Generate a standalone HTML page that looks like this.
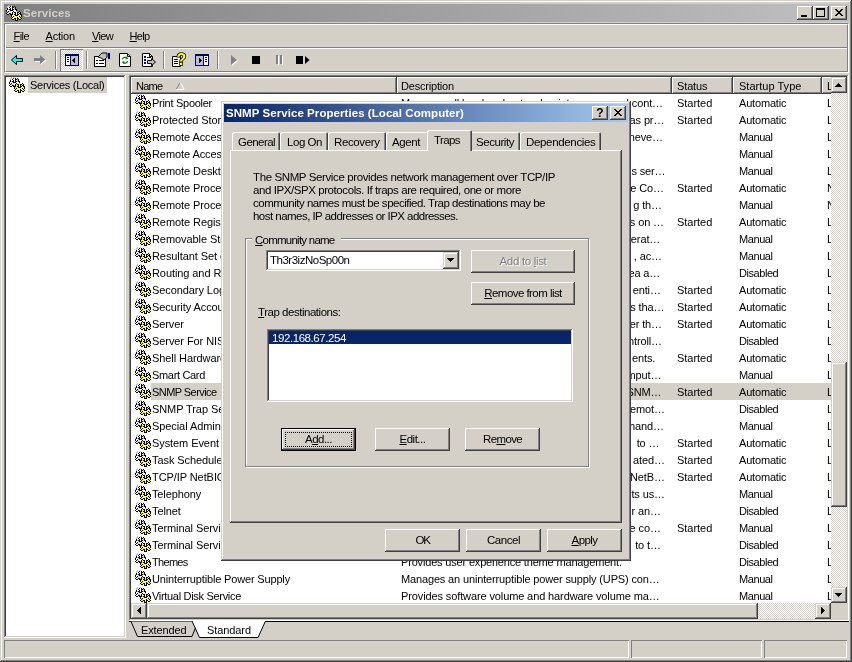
<!DOCTYPE html><html><head><meta charset="utf-8"><title>Services</title><style>
*{box-sizing:border-box}
html,body{margin:0;padding:0}
body{will-change:transform;width:852px;height:662px;position:relative;overflow:hidden;background:#d4d0c8;font-family:"Liberation Sans",sans-serif;font-size:11px;color:#000;line-height:13px}
.a{position:absolute}
.ic{position:absolute;display:block}
.t{position:absolute;white-space:nowrap;font-size:11px;letter-spacing:-0.12px;line-height:13px}
.d{position:absolute;white-space:nowrap;font-size:11.5px;letter-spacing:-0.3px;line-height:13px}
.b{font-weight:bold;font-size:11.5px;letter-spacing:0.06px}
u{text-decoration:underline;text-underline-offset:1px;text-decoration-thickness:1px}
.raised{box-shadow:inset -1px -1px #404040,inset 1px 1px #fff,inset -2px -2px #808080,inset 2px 2px #d4d0c8;background:#d4d0c8}
.raised2{box-shadow:inset -1px -1px #404040,inset 1px 1px #d4d0c8,inset -2px -2px #808080,inset 2px 2px #fff;background:#d4d0c8}
.sunken{box-shadow:inset -1px -1px #fff,inset 1px 1px #808080,inset -2px -2px #d4d0c8,inset 2px 2px #404040;background:#fff}
.dither{background:conic-gradient(#fff 25%,#d4d0c8 0 50%,#fff 0 75%,#d4d0c8 0) 0 0/2px 2px}
.hdr{position:absolute;top:77px;height:17px;background:#d4d0c8;box-shadow:inset -1px -1px #404040,inset 1px 1px #fff,inset -2px -2px #808080}
.row{position:absolute;left:132px;width:699px;height:17px}
.btn{position:absolute;text-align:center}
.vline{position:absolute;width:1px}
.hline{position:absolute;height:1px}
.gear{position:absolute;width:16px;height:16px}.gear::before{content:"";position:absolute;left:-1px;top:-1px;width:1px;height:1px;box-shadow:3px 1px #c0c0c0,6px 1px #c0c0c0,2px 2px #c0c0c0,3px 2px #c0c0c0,4px 2px #fff,5px 2px #000,6px 2px #fff,7px 2px #000,9px 2px #000,2px 3px #c0c0c0,3px 3px #fff,4px 3px #000,5px 3px #fff,6px 3px #fff,7px 3px #000,8px 3px #000,9px 3px #c0c0c0,10px 3px #000,2px 4px #000,3px 4px #fff,4px 4px #fff,5px 4px #000,6px 4px #fff,7px 4px #000,8px 4px #fff,9px 4px #c0c0c0,10px 4px #000,1px 5px #c0c0c0,2px 5px #000,3px 5px #c0c0c0,4px 5px #000,5px 5px #000,6px 5px #fff,7px 5px #000,8px 5px #000,9px 5px #c0c0c0,10px 5px #000,11px 5px #000,1px 6px #000,2px 6px #fff,3px 6px #fff,4px 6px #c0c0c0,5px 6px #000,6px 6px #000,7px 6px #000,8px 6px #fff,9px 6px #fff,10px 6px #fff,11px 6px #000,1px 7px #000,2px 7px #fff,3px 7px #000,4px 7px #fff,5px 7px #c0c0c0,6px 7px #fff,7px 7px #fff,8px 7px #000,9px 7px #fff,10px 7px #fff,11px 7px #c0c0c0,14px 7px #000,2px 8px #000,3px 8px #c0c0c0,4px 8px #c0c0c0,5px 8px #fff,6px 8px #fff,7px 8px #000,8px 8px #ff0,9px 8px #000,10px 8px #000,11px 8px #fff,12px 8px #000,13px 8px #000,14px 8px #ff0,15px 8px #000,1px 9px #000,2px 9px #fff,3px 9px #fff,4px 9px #000,5px 9px #000,6px 9px #c0c0c0,7px 9px #000,8px 9px #ff0,9px 9px #ff0,10px 9px #000,11px 9px #fff,12px 9px #000,13px 9px #ff0,14px 9px #000,15px 9px #000,2px 10px #000,3px 10px #000,5px 10px #000,6px 10px #000,7px 10px #000,8px 10px #ff0,9px 10px #000,10px 10px #000,11px 10px #fff,12px 10px #000,13px 10px #000,14px 10px #fff,15px 10px #000,16px 10px #000,6px 11px #000,7px 11px #ff0,8px 11px #ff0,9px 11px #fff,10px 11px #000,11px 11px #000,12px 11px #000,13px 11px #fff,14px 11px #ff0,15px 11px #ff0,16px 11px #000,6px 12px #000,7px 12px #ff0,8px 12px #000,9px 12px #ff0,10px 12px #fff,11px 12px #ff0,12px 12px #fff,13px 12px #ff0,14px 12px #000,15px 12px #ff0,16px 12px #000,7px 13px #000,8px 13px #ff0,9px 13px #ff0,10px 13px #ff0,11px 13px #fff,12px 13px #000,13px 13px #ff0,14px 13px #ff0,15px 13px #000,6px 14px #000,7px 14px #ff0,8px 14px #ff0,9px 14px #000,10px 14px #000,11px 14px #ff0,12px 14px #000,13px 14px #000,14px 14px #ff0,15px 14px #ff0,16px 14px #000,7px 15px #000,8px 15px #000,10px 15px #000,11px 15px #ff0,12px 15px #000,14px 15px #000,15px 15px #000,10px 16px #000,11px 16px #000,12px 16px #000}</style></head><body>
<div class="a" style="left:0;top:0;width:852px;height:662px;box-shadow:inset -1px -1px #404040,inset 1px 1px #d4d0c8,inset -2px -2px #808080,inset 2px 2px #fff"></div>
<div class="a" style="left:4px;top:4px;width:845px;height:18px;background:linear-gradient(90deg,#808080,#c0c0c0)"></div>
<div class="gear" style="left:6px;top:5px"></div>
<div class="t b" style="left:23px;top:7px;color:#d4d0c8">Services</div>
<div class="a raised" style="left:797px;top:6px;width:16px;height:14px"><div class="a" style="left:4px;top:9px;width:6px;height:2px;background:#000"></div></div>
<div class="a raised" style="left:813px;top:6px;width:16px;height:14px"><div class="a" style="left:3px;top:2px;width:9px;height:9px;border:1px solid #000;border-top-width:2px"></div></div>
<div class="a raised" style="left:831px;top:6px;width:16px;height:14px"><svg class="ic" style="left:4px;top:3px" width="8" height="7" shape-rendering="crispEdges"><path d="M0 0h2v1h-2zM6 0h2v1h-2zM1 1h2v1h-2zM5 1h2v1h-2zM2 2h4v1h-4zM3 3h2v1h-2zM2 4h4v1h-4zM1 5h2v1h-2zM5 5h2v1h-2zM0 6h2v1h-2zM6 6h2v1h-2z" fill="#000"/></svg></div>
<div class="a" style="left:4px;top:23px;width:845px;height:50px;border:1px solid #808080;border-right-color:#fff;border-bottom-color:#fff"></div>
<div class="a" style="left:5px;top:24px;width:843px;height:48px;border:1px solid #fff;border-right-color:#808080;border-bottom-color:#808080"></div>
<div class="hline" style="left:6px;top:47px;width:841px;background:#808080"></div>
<div class="hline" style="left:6px;top:48px;width:841px;background:#fff"></div>
<div class="t " style="left:13.5px;top:30px;letter-spacing:-0.562px"><u>F</u>ile</div>
<div class="t " style="left:45.5px;top:30px;letter-spacing:-0.182px"><u>A</u>ction</div>
<div class="t " style="left:92px;top:30px;letter-spacing:-0.664px"><u>V</u>iew</div>
<div class="t " style="left:129.5px;top:30px;letter-spacing:-0.660px"><u>H</u>elp</div>
<svg class="ic" style="left:10px;top:54px" width="14" height="12"><path d="M6.5 1.5 L6.5 4.5 L12.5 4.5 L12.5 7.5 L6.5 7.5 L6.5 10.5 L1.5 6 Z" fill="#00ffff" stroke="#000" stroke-width="1" stroke-linejoin="miter"/></svg>
<svg class="ic" style="left:33px;top:54px" width="15" height="13"><path d="M8 2 L8 5 L2 5 L2 8 L8 8 L8 11 L13.5 6.5 Z" fill="#fff"/><path d="M7 1 L7 4 L1 4 L1 7 L7 7 L7 10 L12.5 5.5 Z" fill="#808080"/></svg>
<div class="vline" style="left:55px;top:51px;height:18px;background:#808080"></div><div class="vline" style="left:56px;top:51px;height:18px;background:#fff"></div>
<div class="a dither" style="left:60px;top:49px;width:23px;height:22px;box-shadow:inset 1px 1px #808080,inset -1px -1px #fff"></div>
<svg class="ic" style="left:65px;top:54px" width="14" height="12" shape-rendering="crispEdges"><rect x="0" y="0" width="14" height="12" fill="#000080"/><rect x="1" y="2" width="4" height="9" fill="#fff"/><rect x="6" y="2" width="7" height="9" fill="#c0c0c0"/><rect x="2" y="3" width="2" height="1" fill="#000"/><rect x="2" y="5" width="2" height="1" fill="#000"/><rect x="2" y="7" width="2" height="1" fill="#000"/><rect x="9" y="4" width="1" height="5" fill="#000"/><rect x="8" y="5" width="1" height="3" fill="#000"/><rect x="7" y="6" width="1" height="1" fill="#000"/></svg>
<div class="vline" style="left:86px;top:51px;height:18px;background:#808080"></div><div class="vline" style="left:87px;top:51px;height:18px;background:#fff"></div>
<svg class="ic" style="left:94px;top:52px" width="17" height="16" shape-rendering="crispEdges"><rect x="0.5" y="4.5" width="11" height="10" fill="#fff" stroke="#000"/><rect x="2" y="8" width="2" height="1" fill="#000"/><rect x="5" y="8" width="5" height="1" fill="#000"/><rect x="2" y="11" width="2" height="1" fill="#000"/><rect x="5" y="11" width="5" height="1" fill="#000"/><path d="M4 5 L8 1 L13 1 L13 5 L10 8 L7 6 Z" fill="#c0c0c0" stroke="#000" stroke-width="1" shape-rendering="auto"/><rect x="14" y="1" width="2" height="6" fill="#000080"/></svg>
<svg class="ic" style="left:119px;top:53px" width="13" height="15"><path d="M0.5 0.5 H8.5 L11.5 3.5 V13.5 H0.5 Z" fill="#fff" stroke="#000"/><path d="M8.5 0.5 V3.5 H11.5" fill="none" stroke="#000"/><path d="M3.5 6.5 A2.6 2.6 0 0 1 8 5.2 M8.5 8 A2.6 2.6 0 0 1 4 9.3" fill="none" stroke="#008000" stroke-width="1.3"/><path d="M7 3.5 L9.3 5.6 L6.6 6.4 Z M5 11 L2.7 8.9 L5.4 8.1 Z" fill="#008000"/></svg>
<svg class="ic" style="left:142px;top:53px" width="15" height="15"><path d="M0.5 0.5 H7.5 L10.5 3.5 V13.5 H0.5 Z" fill="#fff" stroke="#000"/><path d="M7.5 0.5 V3.5 H10.5" fill="none" stroke="#000"/><rect x="2" y="3" width="2" height="2" fill="#0000c0"/><rect x="5" y="4" width="4" height="1" fill="#0000c0"/><rect x="2" y="6" width="2" height="2" fill="#0000c0"/><rect x="2" y="9" width="2" height="2" fill="#0000c0"/><path d="M5.5 7.5 H9.5 V5.5 L13.5 9 L9.5 12.5 V10.5 H5.5 Z" fill="#c0c0c0" stroke="#000" stroke-width="1"/></svg>
<div class="vline" style="left:163px;top:51px;height:18px;background:#808080"></div><div class="vline" style="left:164px;top:51px;height:18px;background:#fff"></div>
<svg class="ic" style="left:171px;top:52px" width="16" height="16"><path d="M1.5 4.5 H9.5 V14.5 H1.5 Z" fill="#fff" stroke="#000" stroke-width="1"/><rect x="3" y="7" width="4" height="1" fill="#000"/><rect x="3" y="9" width="4" height="1" fill="#000"/><rect x="3" y="11" width="4" height="1" fill="#000"/><text x="5.5" y="13" font-family="Liberation Sans" font-weight="bold" font-size="16" fill="#ffff00" stroke="#000" stroke-width="1.6" paint-order="stroke">?</text></svg>
<svg class="ic" style="left:195px;top:54px" width="14" height="12" shape-rendering="crispEdges"><rect x="0" y="0" width="14" height="12" fill="#000080"/><rect x="1" y="2" width="7" height="9" fill="#c0c0c0"/><rect x="9" y="2" width="4" height="9" fill="#fff"/><rect x="10" y="3" width="2" height="1" fill="#000"/><rect x="10" y="5" width="2" height="1" fill="#000"/><rect x="10" y="7" width="2" height="1" fill="#000"/><rect x="4" y="4" width="1" height="5" fill="#000"/><rect x="5" y="5" width="1" height="3" fill="#000"/><rect x="6" y="6" width="1" height="1" fill="#000"/></svg>
<div class="vline" style="left:217px;top:51px;height:18px;background:#808080"></div><div class="vline" style="left:218px;top:51px;height:18px;background:#fff"></div>
<svg class="ic" style="left:230px;top:54px" width="9" height="13"><path d="M2 2 L2 12 L8 7 Z" fill="#fff"/><path d="M1 1 L1 11 L7 6 Z" fill="#808080"/></svg>
<div class="a" style="left:252px;top:56px;width:8px;height:8px;background:#000"></div>
<div class="a" style="left:276px;top:55px;width:2px;height:9px;background:#808080"></div><div class="a" style="left:278px;top:56px;width:1px;height:9px;background:#fff"></div>
<div class="a" style="left:280px;top:55px;width:2px;height:9px;background:#808080"></div><div class="a" style="left:282px;top:56px;width:1px;height:9px;background:#fff"></div>
<div class="a" style="left:296px;top:56px;width:7px;height:8px;background:#000"></div>
<svg class="ic" style="left:305px;top:56px" width="5" height="8"><path d="M0 0 L0 8 L4.5 4 Z" fill="#000"/></svg>
<div class="a sunken" style="left:4px;top:75px;width:122px;height:563px"></div>
<div class="gear" style="left:9px;top:77px"></div>
<div class="a" style="left:28px;top:77px;width:79px;height:16px;background:#d4d0c8"></div>
<div class="t " style="left:30px;top:79px;letter-spacing:-0.272px">Services (Local)</div>
<div class="a sunken" style="left:129px;top:75px;width:720px;height:546px"></div>
<div class="hdr" style="left:131px;width:266px"></div>
<div class="t " style="left:136px;top:80px;letter-spacing:-0.736px">Name</div>
<div class="hdr" style="left:397px;width:275px"></div>
<div class="t " style="left:401px;top:80px;letter-spacing:-0.185px">Description</div>
<div class="hdr" style="left:672px;width:61px"></div>
<div class="t " style="left:677px;top:80px;letter-spacing:-0.131px">Status</div>
<div class="hdr" style="left:733px;width:89px"></div>
<div class="t " style="left:739px;top:80px;letter-spacing:0.019px">Startup Type</div>
<div class="hdr" style="left:822px;width:20px"></div>
<div class="t " style="left:827px;top:80px">L</div>
<svg class="ic" style="left:176px;top:82px" width="9" height="8"><path d="M0.5 7 L4 0.5" stroke="#808080" fill="none"/><path d="M4.5 0.5 L8 7 M0.5 7.5 H8" stroke="#fff" fill="none"/></svg>
<div class="a" style="left:131px;top:94px;width:700px;height:509px;overflow:hidden">
<div class="gear" style="left:4px;top:0px"></div>
<div class="t " style="left:21px;top:3px;letter-spacing:-0.276px">Print Spooler</div>
<div class="t " style="left:270px;top:3px;letter-spacing:-0.112px">Manages all local and network print queues and cont…</div>
<div class="t " style="left:546px;top:3px;letter-spacing:-0.024px">Started</div>
<div class="t " style="left:608px;top:3px;letter-spacing:-0.180px">Automatic</div>
<div class="t" style="left:696px;top:3px">L</div>
<div class="gear" style="left:4px;top:17px"></div>
<div class="t" style="left:21px;top:20px;letter-spacing:-0.08px">Protected Storage</div>
<div class="t" style="right:166.70000000000005px;top:20px">as pr…</div>
<div class="t " style="left:546px;top:20px;letter-spacing:-0.024px">Started</div>
<div class="t " style="left:608px;top:20px;letter-spacing:-0.180px">Automatic</div>
<div class="t" style="left:696px;top:20px">L</div>
<div class="gear" style="left:4px;top:34px"></div>
<div class="t" style="left:21px;top:37px;letter-spacing:-0.08px">Remote Access Auto Connection Manager</div>
<div class="t" style="right:168px;top:37px">neve…</div>
<div class="t " style="left:608px;top:37px;letter-spacing:-0.413px">Manual</div>
<div class="t" style="left:696px;top:37px">L</div>
<div class="gear" style="left:4px;top:51px"></div>
<div class="t" style="left:21px;top:54px;letter-spacing:-0.08px">Remote Access Connection Manager</div>
<div class="t " style="left:608px;top:54px;letter-spacing:-0.413px">Manual</div>
<div class="t" style="left:696px;top:54px">L</div>
<div class="gear" style="left:4px;top:68px"></div>
<div class="t" style="left:21px;top:71px;letter-spacing:-0.08px">Remote Desktop Help Session Manager</div>
<div class="t" style="right:165.5px;top:71px">s ser…</div>
<div class="t " style="left:608px;top:71px;letter-spacing:-0.413px">Manual</div>
<div class="t" style="left:696px;top:71px">L</div>
<div class="gear" style="left:4px;top:85px"></div>
<div class="t" style="left:21px;top:88px;letter-spacing:-0.08px">Remote Procedure Call (RPC)</div>
<div class="t" style="right:167px;top:88px">e Co…</div>
<div class="t " style="left:546px;top:88px;letter-spacing:-0.024px">Started</div>
<div class="t " style="left:608px;top:88px;letter-spacing:-0.180px">Automatic</div>
<div class="t" style="left:696px;top:88px">N</div>
<div class="gear" style="left:4px;top:102px"></div>
<div class="t" style="left:21px;top:105px;letter-spacing:-0.08px">Remote Procedure Call (RPC) Locator</div>
<div class="t" style="right:169px;top:105px">g th…</div>
<div class="t " style="left:608px;top:105px;letter-spacing:-0.413px">Manual</div>
<div class="t" style="left:696px;top:105px">N</div>
<div class="gear" style="left:4px;top:119px"></div>
<div class="t" style="left:21px;top:122px;letter-spacing:-0.08px">Remote Registry</div>
<div class="t" style="right:167px;top:122px">s on …</div>
<div class="t " style="left:546px;top:122px;letter-spacing:-0.024px">Started</div>
<div class="t " style="left:608px;top:122px;letter-spacing:-0.180px">Automatic</div>
<div class="t" style="left:696px;top:122px">L</div>
<div class="gear" style="left:4px;top:136px"></div>
<div class="t" style="left:21px;top:139px;letter-spacing:-0.08px">Removable Storage</div>
<div class="t" style="right:170.79999999999995px;top:139px">erat…</div>
<div class="t " style="left:608px;top:139px;letter-spacing:-0.413px">Manual</div>
<div class="t" style="left:696px;top:139px">L</div>
<div class="gear" style="left:4px;top:153px"></div>
<div class="t" style="left:21px;top:156px;letter-spacing:-0.08px">Resultant Set of Policy Provider</div>
<div class="t" style="right:169px;top:156px">, ac…</div>
<div class="t " style="left:608px;top:156px;letter-spacing:-0.413px">Manual</div>
<div class="t" style="left:696px;top:156px">L</div>
<div class="gear" style="left:4px;top:170px"></div>
<div class="t" style="left:21px;top:173px;letter-spacing:-0.08px">Routing and Remote Access</div>
<div class="t" style="right:170.79999999999995px;top:173px">ea a…</div>
<div class="t " style="left:608px;top:173px;letter-spacing:-0.439px">Disabled</div>
<div class="t" style="left:696px;top:173px">L</div>
<div class="gear" style="left:4px;top:187px"></div>
<div class="t" style="left:21px;top:190px;letter-spacing:-0.08px">Secondary Logon</div>
<div class="t" style="right:170.20000000000005px;top:190px">enti…</div>
<div class="t " style="left:546px;top:190px;letter-spacing:-0.024px">Started</div>
<div class="t " style="left:608px;top:190px;letter-spacing:-0.180px">Automatic</div>
<div class="t" style="left:696px;top:190px">L</div>
<div class="gear" style="left:4px;top:204px"></div>
<div class="t" style="left:21px;top:207px;letter-spacing:-0.08px">Security Accounts Manager</div>
<div class="t" style="right:166.70000000000005px;top:207px">s tha…</div>
<div class="t " style="left:546px;top:207px;letter-spacing:-0.024px">Started</div>
<div class="t " style="left:608px;top:207px;letter-spacing:-0.180px">Automatic</div>
<div class="t" style="left:696px;top:207px">L</div>
<div class="gear" style="left:4px;top:221px"></div>
<div class="t " style="left:21px;top:224px;letter-spacing:-0.118px">Server</div>
<div class="t" style="right:169px;top:224px">er th…</div>
<div class="t " style="left:546px;top:224px;letter-spacing:-0.024px">Started</div>
<div class="t " style="left:608px;top:224px;letter-spacing:-0.180px">Automatic</div>
<div class="t" style="left:696px;top:224px">L</div>
<div class="gear" style="left:4px;top:238px"></div>
<div class="t" style="left:21px;top:241px;letter-spacing:-0.08px">Server For NIS</div>
<div class="t" style="right:169px;top:241px">ntroll…</div>
<div class="t " style="left:608px;top:241px;letter-spacing:-0.439px">Disabled</div>
<div class="t" style="left:696px;top:241px">L</div>
<div class="gear" style="left:4px;top:255px"></div>
<div class="t" style="left:21px;top:258px;letter-spacing:-0.08px">Shell Hardware Detection</div>
<div class="t" style="right:175.70000000000005px;top:258px">ents.</div>
<div class="t " style="left:546px;top:258px;letter-spacing:-0.024px">Started</div>
<div class="t " style="left:608px;top:258px;letter-spacing:-0.180px">Automatic</div>
<div class="t" style="left:696px;top:258px">L</div>
<div class="gear" style="left:4px;top:272px"></div>
<div class="t " style="left:21px;top:275px;letter-spacing:-0.325px">Smart Card</div>
<div class="t" style="right:169.60000000000002px;top:275px">mput…</div>
<div class="t " style="left:608px;top:275px;letter-spacing:-0.413px">Manual</div>
<div class="t" style="left:696px;top:275px">L</div>
<div class="a" style="left:20px;top:289px;width:680px;height:17px;background:#d4d0c8"></div>
<div class="gear" style="left:4px;top:289px"></div>
<div class="t " style="left:21px;top:292px;letter-spacing:-0.561px">SNMP Service</div>
<div class="t" style="right:169.60000000000002px;top:292px">SNM…</div>
<div class="t " style="left:546px;top:292px;letter-spacing:-0.024px">Started</div>
<div class="t " style="left:608px;top:292px;letter-spacing:-0.180px">Automatic</div>
<div class="t" style="left:696px;top:292px">L</div>
<div class="gear" style="left:4px;top:306px"></div>
<div class="t" style="left:21px;top:309px;letter-spacing:-0.08px">SNMP Trap Service</div>
<div class="t" style="right:166.10000000000002px;top:309px">emot…</div>
<div class="t " style="left:608px;top:309px;letter-spacing:-0.439px">Disabled</div>
<div class="t" style="left:696px;top:309px">L</div>
<div class="gear" style="left:4px;top:323px"></div>
<div class="t" style="left:21px;top:326px;letter-spacing:-0.08px">Special Administration Console Helper</div>
<div class="t" style="right:167px;top:326px">mand…</div>
<div class="t " style="left:608px;top:326px;letter-spacing:-0.413px">Manual</div>
<div class="t" style="left:696px;top:326px">L</div>
<div class="gear" style="left:4px;top:340px"></div>
<div class="t" style="left:21px;top:343px;letter-spacing:-0.08px">System Event Notification</div>
<div class="t" style="right:171.60000000000002px;top:343px"> to …</div>
<div class="t " style="left:546px;top:343px;letter-spacing:-0.024px">Started</div>
<div class="t " style="left:608px;top:343px;letter-spacing:-0.180px">Automatic</div>
<div class="t" style="left:696px;top:343px">L</div>
<div class="gear" style="left:4px;top:357px"></div>
<div class="t" style="left:21px;top:360px;letter-spacing:-0.08px">Task Scheduler</div>
<div class="t" style="right:166.10000000000002px;top:360px">ated…</div>
<div class="t " style="left:546px;top:360px;letter-spacing:-0.024px">Started</div>
<div class="t " style="left:608px;top:360px;letter-spacing:-0.180px">Automatic</div>
<div class="t" style="left:696px;top:360px">L</div>
<div class="gear" style="left:4px;top:374px"></div>
<div class="t" style="left:21px;top:377px;letter-spacing:-0.08px">TCP/IP NetBIOS Helper</div>
<div class="t" style="right:166.10000000000002px;top:377px">NetB…</div>
<div class="t " style="left:546px;top:377px;letter-spacing:-0.024px">Started</div>
<div class="t " style="left:608px;top:377px;letter-spacing:-0.180px">Automatic</div>
<div class="t" style="left:696px;top:377px">L</div>
<div class="gear" style="left:4px;top:391px"></div>
<div class="t " style="left:21px;top:394px;letter-spacing:-0.128px">Telephony</div>
<div class="t" style="right:166.10000000000002px;top:394px">ts us…</div>
<div class="t " style="left:608px;top:394px;letter-spacing:-0.413px">Manual</div>
<div class="t" style="left:696px;top:394px">L</div>
<div class="gear" style="left:4px;top:408px"></div>
<div class="t " style="left:21px;top:411px;letter-spacing:-0.110px">Telnet</div>
<div class="t" style="right:170.20000000000005px;top:411px">r an…</div>
<div class="t " style="left:608px;top:411px;letter-spacing:-0.439px">Disabled</div>
<div class="t" style="left:696px;top:411px">L</div>
<div class="gear" style="left:4px;top:425px"></div>
<div class="t" style="left:21px;top:428px;letter-spacing:-0.08px">Terminal Services</div>
<div class="t" style="right:170.20000000000005px;top:428px">e co…</div>
<div class="t " style="left:546px;top:428px;letter-spacing:-0.024px">Started</div>
<div class="t " style="left:608px;top:428px;letter-spacing:-0.413px">Manual</div>
<div class="t" style="left:696px;top:428px">L</div>
<div class="gear" style="left:4px;top:442px"></div>
<div class="t" style="left:21px;top:445px;letter-spacing:-0.08px">Terminal Services Session Directory</div>
<div class="t" style="right:170.20000000000005px;top:445px"> to t…</div>
<div class="t " style="left:608px;top:445px;letter-spacing:-0.439px">Disabled</div>
<div class="t" style="left:696px;top:445px">L</div>
<div class="gear" style="left:4px;top:459px"></div>
<div class="t " style="left:21px;top:462px;letter-spacing:-0.692px">Themes</div>
<div class="t " style="left:270px;top:462px;letter-spacing:-0.173px">Provides user experience theme management.</div>
<div class="t " style="left:608px;top:462px;letter-spacing:-0.439px">Disabled</div>
<div class="t" style="left:696px;top:462px">L</div>
<div class="gear" style="left:4px;top:476px"></div>
<div class="t " style="left:21px;top:479px;letter-spacing:-0.160px">Uninterruptible Power Supply</div>
<div class="t " style="left:270px;top:479px;letter-spacing:-0.148px">Manages an uninterruptible power supply (UPS) con…</div>
<div class="t " style="left:608px;top:479px;letter-spacing:-0.413px">Manual</div>
<div class="t" style="left:696px;top:479px">L</div>
<div class="gear" style="left:4px;top:493px"></div>
<div class="t " style="left:21px;top:496px;letter-spacing:-0.309px">Virtual Disk Service</div>
<div class="t " style="left:270px;top:496px;letter-spacing:-0.115px">Provides software volume and hardware volume ma…</div>
<div class="t " style="left:608px;top:496px;letter-spacing:-0.413px">Manual</div>
<div class="t" style="left:696px;top:496px">L</div>
</div>
<div class="a dither" style="left:831px;top:77px;width:16px;height:526px"></div>
<div class="a raised2" style="left:831px;top:77px;width:16px;height:16px"><svg class="ic" style="left:4px;top:6px" width="7" height="4" shape-rendering="crispEdges"><path d="M0 3h7v1h-7zM1 2h5v1h-5zM2 1h3v1h-3zM3 0h1v1h-1z" fill="#000"/></svg></div>
<div class="a raised2" style="left:831px;top:587px;width:16px;height:16px"><svg class="ic" style="left:4px;top:6px" width="7" height="4" shape-rendering="crispEdges"><path d="M0 0h7v1h-7zM1 1h5v1h-5zM2 2h3v1h-3zM3 3h1v1h-1z" fill="#000"/></svg></div>
<div class="a raised2" style="left:831px;top:362px;width:16px;height:145px"></div>
<div class="a dither" style="left:131px;top:603px;width:700px;height:16px"></div>
<div class="a raised2" style="left:131px;top:603px;width:16px;height:16px"><svg class="ic" style="left:6px;top:4px" width="4" height="7" shape-rendering="crispEdges"><path d="M3 0h1v7h-1zM2 1h1v5h-1zM1 2h1v3h-1zM0 3h1v1h-1z" fill="#000"/></svg></div>
<div class="a raised2" style="left:815px;top:603px;width:16px;height:16px"><svg class="ic" style="left:6px;top:4px" width="4" height="7" shape-rendering="crispEdges"><path d="M0 0h1v7h-1zM1 1h1v5h-1zM2 2h1v3h-1zM3 3h1v1h-1z" fill="#000"/></svg></div>
<div class="a raised2" style="left:147px;top:603px;width:611px;height:16px"></div>
<div class="a" style="left:831px;top:603px;width:16px;height:16px;background:#d4d0c8"></div>
<svg class="ic" style="left:130px;top:621px;overflow:visible" width="719" height="18"><rect x="-1" y="0" width="720" height="1" fill="#000"/><path d="M1 0.5 L7.5 15.5 H62 L68 0.5" fill="#d4d0c8" stroke="#000" stroke-width="1"/><path d="M62 0 L69.5 16.5 H128 L135.5 0" fill="#fff" stroke="#000" stroke-width="1"/><rect x="63" y="0" width="72" height="1" fill="#fff"/></svg>
<div class="t " style="left:141px;top:624px;letter-spacing:-0.123px">Extended</div>
<div class="t " style="left:207px;top:624px;letter-spacing:-0.082px">Standard</div>
<div class="a" style="left:4px;top:640px;width:625px;height:18px;box-shadow:inset 1px 1px #808080,inset -1px -1px #fff"></div>
<div class="a" style="left:631px;top:640px;width:131px;height:18px;box-shadow:inset 1px 1px #808080,inset -1px -1px #fff"></div>
<div class="a" style="left:764px;top:640px;width:83px;height:18px;box-shadow:inset 1px 1px #808080,inset -1px -1px #fff"></div>
<div class="a" style="left:221px;top:101px;width:410px;height:460px;background:#d4d0c8;box-shadow:inset -1px -1px #404040,inset 1px 1px #d4d0c8,inset -2px -2px #808080,inset 2px 2px #fff"></div>
<div class="a" style="left:224px;top:104px;width:404px;height:18px;background:linear-gradient(90deg,#0a246a,#a6caf0)"></div>
<div class="t b" style="left:226px;top:107px;color:#fff">SNMP Service Properties (Local Computer)</div>
<div class="a raised" style="left:592px;top:106px;width:16px;height:14px"><div class="a" style="left:4px;top:0px;width:8px;font-weight:bold;font-size:12px;line-height:14px;text-align:center">?</div></div>
<div class="a raised" style="left:610px;top:106px;width:16px;height:14px"><svg class="ic" style="left:4px;top:3px" width="8" height="7" shape-rendering="crispEdges"><path d="M0 0h2v1h-2zM6 0h2v1h-2zM1 1h2v1h-2zM5 1h2v1h-2zM2 2h4v1h-4zM3 3h2v1h-2zM2 4h4v1h-4zM1 5h2v1h-2zM5 5h2v1h-2zM0 6h2v1h-2zM6 6h2v1h-2z" fill="#000"/></svg></div>
<div class="a" style="left:230px;top:150px;width:392px;height:373px;box-shadow:inset -1px -1px #404040,inset 1px 1px #fff,inset -2px -2px #808080"></div>
<div class="a" style="left:232px;top:132px;width:48px;height:18px;background:#d4d0c8;border-radius:2px 2px 0 0;box-shadow:inset 1px 1px #fff,inset -1px 0 #404040,inset -2px 0 #808080"></div><div class="d " style="left:238px;top:136px;letter-spacing:-0.560px">General</div>
<div class="a" style="left:280px;top:132px;width:48px;height:18px;background:#d4d0c8;border-radius:2px 2px 0 0;box-shadow:inset 1px 1px #fff,inset -1px 0 #404040,inset -2px 0 #808080"></div><div class="d " style="left:287px;top:136px;letter-spacing:-0.456px">Log On</div>
<div class="a" style="left:328px;top:132px;width:58px;height:18px;background:#d4d0c8;border-radius:2px 2px 0 0;box-shadow:inset 1px 1px #fff,inset -1px 0 #404040,inset -2px 0 #808080"></div><div class="d " style="left:334px;top:136px;letter-spacing:-0.385px">Recovery</div>
<div class="a" style="left:386px;top:132px;width:43px;height:18px;background:#d4d0c8;border-radius:2px 2px 0 0;box-shadow:inset 1px 1px #fff,inset -1px 0 #404040,inset -2px 0 #808080"></div><div class="d " style="left:392px;top:136px;letter-spacing:-0.412px">Agent</div>
<div class="a" style="left:470px;top:132px;width:50px;height:18px;background:#d4d0c8;border-radius:2px 2px 0 0;box-shadow:inset 1px 1px #fff,inset -1px 0 #404040,inset -2px 0 #808080"></div><div class="d " style="left:476px;top:136px;letter-spacing:-0.443px">Security</div>
<div class="a" style="left:520px;top:132px;width:81px;height:18px;background:#d4d0c8;border-radius:2px 2px 0 0;box-shadow:inset 1px 1px #fff,inset -1px 0 #404040,inset -2px 0 #808080"></div><div class="d " style="left:526px;top:136px;letter-spacing:-0.336px">Dependencies</div>
<div class="a" style="left:427px;top:130px;width:45px;height:21px;background:#d4d0c8;border-radius:2px 2px 0 0;box-shadow:inset 1px 1px #fff,inset -1px 0 #404040,inset -2px 0 #808080"></div><div class="a" style="left:428px;top:150px;width:42px;height:2px;background:#d4d0c8"></div><div class="d " style="left:434px;top:134px;letter-spacing:-0.597px">Traps</div>
<div class="d " style="left:253px;top:171px;letter-spacing:-0.386px">The SNMP Service provides network management over TCP/IP</div>
<div class="d " style="left:253px;top:184px;letter-spacing:-0.423px">and IPX/SPX protocols. If traps are required, one or more</div>
<div class="d " style="left:253px;top:197px;letter-spacing:-0.489px">community names must be specified. Trap destinations may be</div>
<div class="d " style="left:253px;top:210px;letter-spacing:-0.532px">host names, IP addresses or IPX addresses.</div>
<div class="a" style="left:245px;top:238px;width:344px;height:229px;border:1px solid #808080;box-shadow:inset 1px 1px #fff, 1px 1px #fff"></div>
<div class="a" style="left:252px;top:237px;width:89px;height:4px;background:#d4d0c8"></div>
<div class="d " style="left:255px;top:234px;letter-spacing:-0.759px"><u>C</u>ommunity name</div>
<div class="a sunken" style="left:266px;top:250px;width:195px;height:21px"></div>
<div class="d " style="left:270px;top:254px;letter-spacing:-0.487px">Th3r3izNoSp00n</div>
<div class="a raised2" style="left:443px;top:252px;width:16px;height:17px"><svg class="ic" style="left:4px;top:6px" width="7" height="4" shape-rendering="crispEdges"><path d="M0 0h7v1h-7zM1 1h5v1h-5zM2 2h3v1h-3zM3 3h1v1h-1z" fill="#000"/></svg></div>
<div class="a raised" style="left:471px;top:250px;width:104px;height:23px"></div><div class="a" style="left:471px;top:255px;width:104px;height:13px;display:flex;justify-content:center"><div class="d " style="position:static;color:#808080;text-shadow:1px 1px #fff;;letter-spacing:-0.320px">Add to <u>l</u>ist</div></div>
<div class="a raised" style="left:471px;top:282px;width:104px;height:23px"></div><div class="a" style="left:471px;top:287px;width:104px;height:13px;display:flex;justify-content:center"><div class="d " style="position:static;;letter-spacing:-0.549px"><u>R</u>emove from list</div></div>
<div class="d " style="left:258px;top:306px;letter-spacing:-0.472px"><u>T</u>rap destinations:</div>
<div class="a sunken" style="left:267px;top:329px;width:306px;height:73px"></div>
<div class="a" style="left:269px;top:331px;width:302px;height:13px;background:#0a246a"></div>
<div class="d " style="left:272px;top:332px;color:#fff;letter-spacing:-0.425px">192.168.67.254</div>
<div class="a" style="left:281px;top:428px;width:75px;height:23px;background:#000"></div><div class="a raised" style="left:282px;top:429px;width:73px;height:21px"></div><div class="a" style="left:285px;top:432px;width:67px;height:15px;border:1px dotted #000"></div><div class="a" style="left:281px;top:433px;width:75px;height:13px;display:flex;justify-content:center"><div class="d " style="position:static;;letter-spacing:-0.510px">A<u>d</u>d...</div></div>
<div class="a raised" style="left:375px;top:428px;width:75px;height:23px"></div><div class="a" style="left:375px;top:433px;width:75px;height:13px;display:flex;justify-content:center"><div class="d " style="position:static;;letter-spacing:-0.487px"><u>E</u>dit...</div></div>
<div class="a raised" style="left:465px;top:428px;width:75px;height:23px"></div><div class="a" style="left:465px;top:433px;width:75px;height:13px;display:flex;justify-content:center"><div class="d " style="position:static;;letter-spacing:-0.641px">Re<u>m</u>ove</div></div>
<div class="a raised" style="left:385px;top:529px;width:75px;height:23px"></div><div class="a" style="left:385px;top:534px;width:75px;height:13px;display:flex;justify-content:center"><div class="d " style="position:static;;letter-spacing:-1.312px">OK</div></div>
<div class="a raised" style="left:466px;top:529px;width:75px;height:23px"></div><div class="a" style="left:466px;top:534px;width:75px;height:13px;display:flex;justify-content:center"><div class="d " style="position:static;;letter-spacing:-0.469px">Cancel</div></div>
<div class="a raised" style="left:547px;top:529px;width:75px;height:23px"></div><div class="a" style="left:547px;top:534px;width:75px;height:13px;display:flex;justify-content:center"><div class="d " style="position:static;;letter-spacing:-0.556px"><u>A</u>pply</div></div>
</body></html>
